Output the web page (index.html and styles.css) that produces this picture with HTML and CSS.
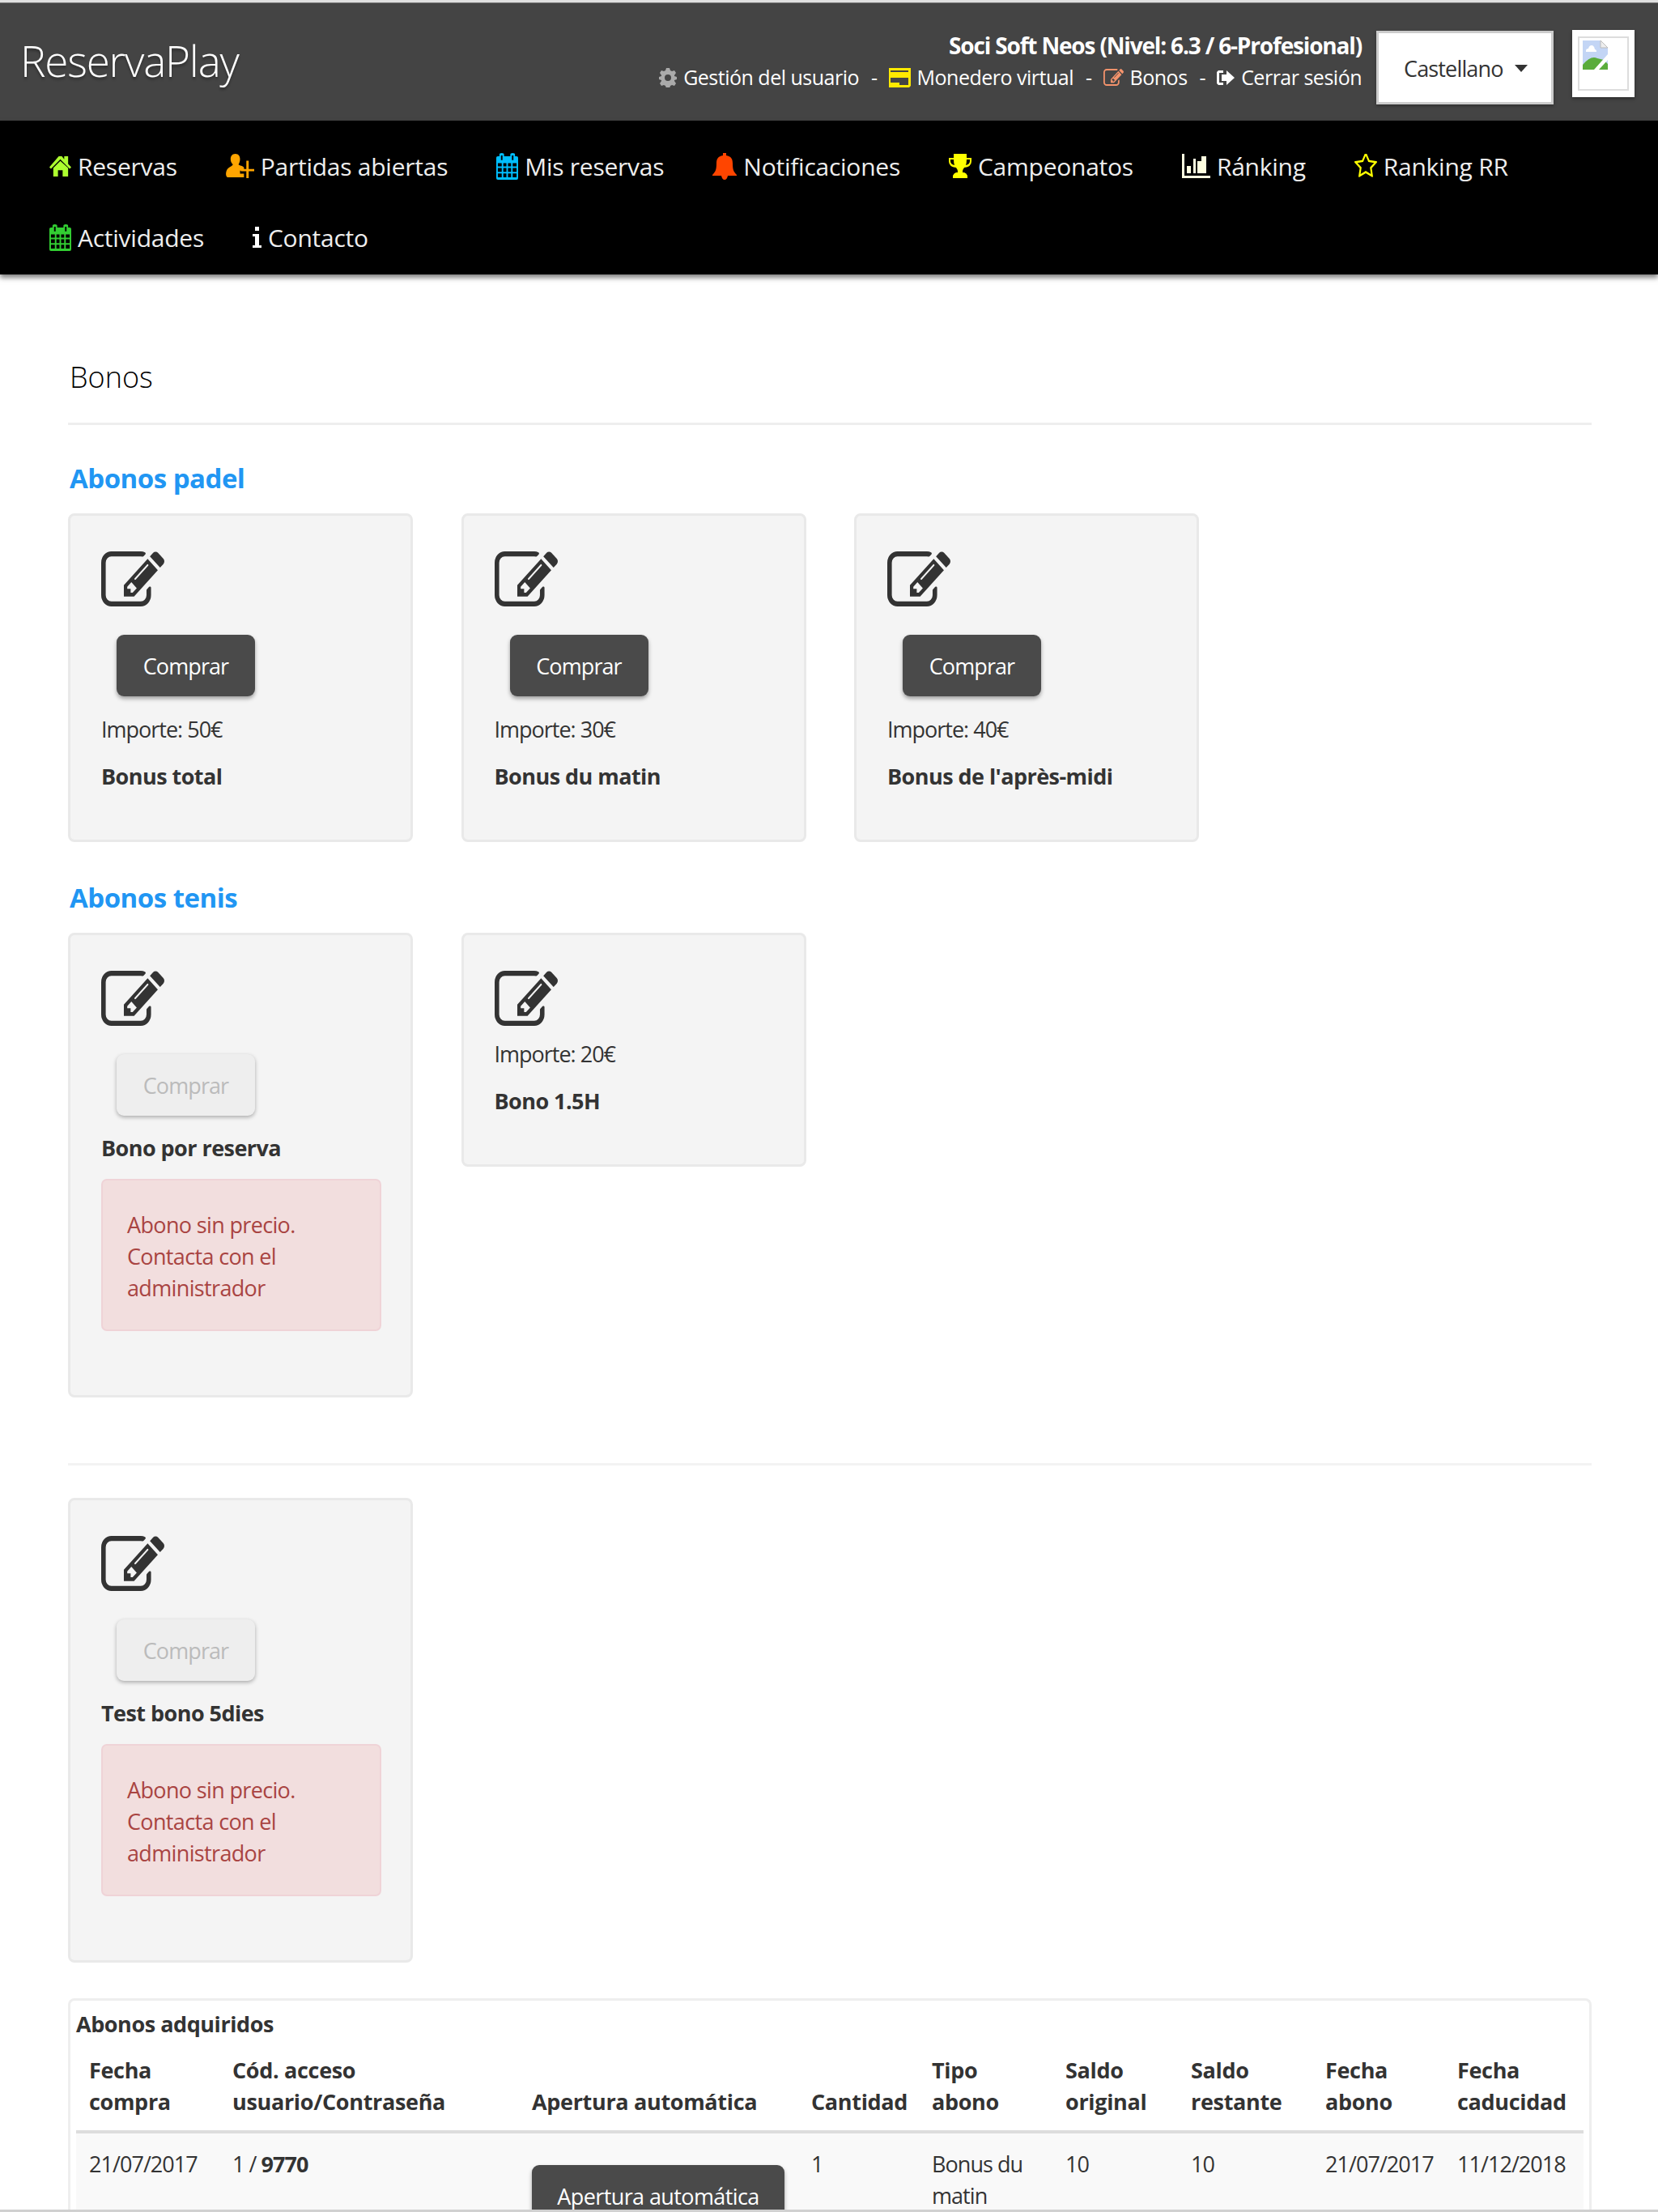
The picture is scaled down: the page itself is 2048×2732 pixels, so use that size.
FILE: index.html
```
<!DOCTYPE html>
<html lang="es">
<head>
    <meta charset="UTF-8">
    <title>ReservaPlay</title>
    <link rel="stylesheet" href="styles.css">
</head>
<body>
    <!-- Icons -->
    <svg class="sprite">
        <symbol id="edit" viewBox="0 128 1784 1408" preserveAspectRatio="none"><path d="M888 1184l116-116-152-152-116 116v56h96v96h56zm440-720q-16-16-33 1l-350 350q-17 17-1 33t33-1l350-350q17-17 1-33zm80 594v190q0 119-84.500 203.500t-203.500 84.500h-832q-119 0-203.500-84.500t-84.500-203.500v-832q0-119 84.500-203.500t203.500-84.500h832q63 0 117 25 15 7 18 23 3 17-9 29l-49 49q-14 14-32 8-23-6-45-6h-832q-66 0-113 47t-47 113v832q0 66 47 113t113 47h832q66 0 113-47t47-113v-126q0-13 9-22l64-64q15-15 35-7t20 29zm-96-738l288 288-672 672h-288v-288zm444 132l-92 92-288-288 92-92q28-28 68-28t68 28l152 152q28 28 28 68t-28 68z"/></symbol>
        <symbol id="home" viewBox="0 0 28 26" preserveAspectRatio="none"><path d="M14 6L5 15v11h6v-8h6v8h7V15z"/><path d="M12 0L0 14l2 2L14 4l12 12 2-2-4-4V0h-5v4l-3-4z"/></symbol>
        <symbol id="user-plus" viewBox="0 0 36 32" preserveAspectRatio="none"><path d="M12 0c4 0 6 3 6 7 0 3-1 5-2 7 2 2 5 1 7 4v4h-5v4h5v5H2c-3-2-2-8 0-11 2-3 5-3 7-6C7 12 6 10 6 7c0-4 2-7 6-7z"/><path d="M26 9h3v11h7v3h-7v9h-3v-9h-7v-3h7z"/></symbol>
        <symbol id="calendar" viewBox="0 0 28 34" preserveAspectRatio="none"><path fill-rule="evenodd" d="M2 4h2V2q0-2 3-2t3 2v2h8V2q0-2 3-2t3 2v2h2q2 0 2 2v26q0 2-2 2H2q-2 0-2-2V6q0-2 2-2zm0 9v4h5v-4zm7 0v4h4v-4zm6 0v4h4v-4zm6 0v4h5v-4zM2 19v5h5v-5zm7 0v5h4v-5zm6 0v5h4v-5zm6 0v5h5v-5zM2 26v5h5v-5zm7 0v5h4v-5zm6 0v5h4v-5zm6 0v5h5v-5zM6 3v6h2V3zm14 0v6h2V3z"/></symbol>
        <symbol id="bell" viewBox="0 0 30 33" preserveAspectRatio="none"><path d="M13 0h4v3c6 1 8 4 8 10 0 7 1 10 5 14v1H19q-1 5-4 5t-4-5H0v-1c4-4 5-7 5-14 0-6 2-9 8-10z"/></symbol>
        <symbol id="trophy" viewBox="0 0 28 30" preserveAspectRatio="none"><path fill-rule="evenodd" d="M6 0h16v5h6v4q0 7-9 8-2 2-2 6h2q3 1 4 4v3H5v-3q1-3 4-4h2q0-4-2-6-9-1-9-8V5h6zM2 7v2q0 4 5 5-1-3-1-7zm20 0q0 4-1 7 5-1 5-5V7z"/></symbol>
        <symbol id="chart" viewBox="0 0 35 30" preserveAspectRatio="none"><path d="M0 0h3v27h32v3H0zM6 15h5v9H6zm8-9h3v18h-3zm5 3h5V3h6v21H19z"/></symbol>
        <symbol id="star" viewBox="64 128 1664 1560" preserveAspectRatio="none"><path d="M1201 1004l306-297-422-62-189-382-189 382-422 62 306 297-73 421 378-199 377 199zm527-357q0 22-26 48l-363 354 86 500q1 7 1 20 0 50-41 50-19 0-40-12l-449-236-449 236q-22 12-40 12-21 0-31.500-14.500t-10.500-35.500q0-6 2-20l86-500-364-354q-25-27-25-48 0-37 56-46l502-73 225-455q19-41 49-41t49 41l225 455 502 73q56 9 56 46z"/></symbol>
        <symbol id="info" viewBox="0 0 11 26" preserveAspectRatio="none"><path d="M3 0h5v5H3zM0 9h8v14h3v3H0v-3h3V12H0z"/></symbol>
        <symbol id="cog" viewBox="0 0 22 24" preserveAspectRatio="none"><path fill-rule="evenodd" d="M9 0h4l1 3 2 1 3-1 2 3-2 3v1l3 1v3l-3 1v1l2 3-2 3-3-1-2 1-1 3H9l-1-3-2-1-3 1-2-3 2-3v-1l-3-1v-3l3-1V9L1 6l2-3 3 1 2-1zm2 8a4 4 0 1 0 0 8 4 4 0 0 0 0-8z"/></symbol>
        <symbol id="card" viewBox="0 0 27 24" preserveAspectRatio="none"><path fill-rule="evenodd" d="M0 0h27v22l-2 2H0zM2 3v2h22V3zm0 9v6h11v3h11v-9z"/></symbol>
        <symbol id="sign-out" viewBox="0 0 22 20" preserveAspectRatio="none"><path d="M0 3l2-2h6v3H3v12h5v3H2l-2-2z"/><path d="M6 6h6V1l10 9-10 9v-5H6z"/></symbol>
    </svg>

    <header class="header">
        <a class="brand" href="#">ReservaPlay</a>
        <div class="user">
            <strong class="user-name">Soci Soft Neos (Nivel: 6.3 / 6-Profesional)</strong>
            <div class="user-links">
                <svg class="icon cog"><use href="#cog"/></svg><a>Gestión del usuario</a><i>-</i>
                <svg class="icon card"><use href="#card"/></svg><a>Monedero virtual</a><i>-</i>
                <svg class="icon edit"><use href="#edit"/></svg><a>Bonos</a><i>-</i>
                <svg class="icon sign-out"><use href="#sign-out"/></svg><a>Cerrar sesión</a>
            </div>
        </div>
        <button class="lang">Castellano <span class="caret"></span></button>
        <div class="avatar">
            <div class="avatar-inner">
                <!-- missing photo -->
                <svg viewBox="0 0 31 36" width="31" height="36"><path fill="#c3d5f5" d="M0 0h22l9 9v27H0z"/><path fill="#fff" d="M4 13q0-3 3-3 1-4 4-4t4 5q2 0 2 3H4z"/><path fill="#5aac3c" d="M0 36V30q10-12 18-8l8 2 5 5v7z"/><path fill="#fff" d="M31 17v7L20 36h-6z"/><path fill="#eee" stroke="#bbb" d="M22 0v9h9z"/></svg>
            </div>
        </div>
    </header>

    <nav class="nav">
        <a><svg class="icon home"><use href="#home"/></svg><span>Reservas</span></a>
        <a><svg class="icon user-plus"><use href="#user-plus"/></svg><span>Partidas abiertas</span></a>
        <a><svg class="icon calendar"><use href="#calendar"/></svg><span>Mis reservas</span></a>
        <a><svg class="icon bell"><use href="#bell"/></svg><span>Notificaciones</span></a>
        <a><svg class="icon trophy"><use href="#trophy"/></svg><span>Campeonatos</span></a>
        <a><svg class="icon chart"><use href="#chart"/></svg><span>Ránking</span></a>
        <a><svg class="icon star"><use href="#star"/></svg><span>Ranking RR</span></a>
        <a><svg class="icon calendar green"><use href="#calendar"/></svg><span>Actividades</span></a>
        <a><svg class="icon info"><use href="#info"/></svg><span>Contacto</span></a>
    </nav>

    <main class="content">
        <h1>Bonos</h1>

        <h2>Abonos padel</h2>
        <div class="row">
            <div class="well">
                <svg class="icon big"><use href="#edit"/></svg>
                <button class="btn">Comprar</button>
                <p>Importe: 50€</p>
                <p><b>Bonus total</b></p>
            </div>
            <div class="well">
                <svg class="icon big"><use href="#edit"/></svg>
                <button class="btn">Comprar</button>
                <p>Importe: 30€</p>
                <p><b>Bonus du matin</b></p>
            </div>
            <div class="well">
                <svg class="icon big"><use href="#edit"/></svg>
                <button class="btn">Comprar</button>
                <p>Importe: 40€</p>
                <p><b>Bonus de l'après-midi</b></p>
            </div>
        </div>

        <h2>Abonos tenis</h2>
        <div class="row">
            <div class="well">
                <svg class="icon big"><use href="#edit"/></svg>
                <button class="btn" disabled>Comprar</button>
                <p><b>Bono por reserva</b></p>
                <div class="alert">Abono sin precio. Contacta con el administrador</div>
            </div>
            <div class="well">
                <svg class="icon big"><use href="#edit"/></svg>
                <p>Importe: 20€</p>
                <p><b>Bono 1.5H</b></p>
            </div>
        </div>

        <hr>
        <div class="row">
            <div class="well">
                <svg class="icon big"><use href="#edit"/></svg>
                <button class="btn" disabled>Comprar</button>
                <p><b>Test bono 5dies</b></p>
                <div class="alert">Abono sin precio. Contacta con el administrador</div>
            </div>
        </div>

        <div class="panel">
            <b class="panel-title">Abonos adquiridos</b>
            <table>
                <colgroup><col class="c1"><col class="c2"><col class="c3"><col class="c4"><col class="c5"><col class="c6"><col class="c7"><col class="c8"><col></colgroup>
                <thead>
                    <tr>
                        <th>Fecha<br>compra</th>
                        <th>Cód. acceso<br>usuario/Contraseña</th>
                        <th>Apertura automática</th>
                        <th>Cantidad</th>
                        <th>Tipo<br>abono</th>
                        <th>Saldo<br>original</th>
                        <th>Saldo<br>restante</th>
                        <th>Fecha<br>abono</th>
                        <th>Fecha<br>caducidad</th>
                    </tr>
                </thead>
                <tbody>
                    <tr>
                        <td>21/07/2017</td>
                        <td>1 / <b>9770</b></td>
                        <td><button class="btn open">Apertura automática</button></td>
                        <td>1</td>
                        <td>Bonus du<br>matin</td>
                        <td>10</td>
                        <td>10</td>
                        <td>21/07/2017</td>
                        <td>11/12/2018</td>
                    </tr>
                </tbody>
            </table>
        </div>
    </main>
</body>
</html>
```
FILE: styles.css
```
* {
    box-sizing: border-box;
}

body {
    margin: 0;
    height: 2732px;
    overflow: hidden;
    background: #fff;
    color: #333;
    font-family: "Open Sans", sans-serif;
    font-size: 27px;
    line-height: 39px;
    border-top: 3px solid #e0e0e0;
    border-bottom: 3px solid #d0d0d0;
}

.sprite {
    display: none;
}

.icon {
    fill: currentColor;
    flex: none;
}

/* Header */
.header {
    display: flex;
    height: 146px;
    padding: 0 29px 0 25px;
    background: #444;
    color: #fff;
    border-top: 1px solid #777;
}

.brand {
    margin-top: 35px;
    font-size: 53px;
    font-weight: 300;
    line-height: 72px;
    color: #fff;
    letter-spacing: -1.2px;
    text-decoration: none;
    text-shadow: 0 3px 3px rgba(0, 0, 0, 0.3);
}

.user {
    margin-left: auto;
    padding-top: 33px;
    text-align: right;
    white-space: nowrap;
}

.user-name {
    display: block;
    font-size: 28px;
    letter-spacing: -1.17px;
    line-height: 39px;
}

.user-links {
    display: flex;
    align-items: center;
    justify-content: flex-end;
    height: 39px;
    font-size: 25px;
    letter-spacing: -0.5px;
}

.user-links a {
    margin-left: 8px;
}

.user-links i {
    font-style: normal;
    margin: 0 14px 0 15px;
}

.cog { width: 22px; height: 24px; color: #aaa; }
.card { width: 27px; height: 24px; color: #ffe900; }
.edit { width: 25px; height: 21px; color: #f4936c; }
.sign-out { width: 22px; height: 20px; }

.lang {
    display: flex;
    align-items: center;
    width: 219px;
    height: 91px;
    margin: 34px 23px 0 18px;
    padding: 2px 0 0 31px;
    background: #fff;
    border: 3px solid #ccc;
    font: inherit;
    letter-spacing: -0.85px;
    color: #333;
    box-shadow: 0 2px 4px rgba(0, 0, 0, 0.3);
}

.caret {
    margin-left: 14px;
    border: 8px solid transparent;
    border-top: 9px solid #333;
    border-bottom: 0;
}

.avatar {
    width: 77px;
    height: 83px;
    margin-top: 33px;
    padding: 8px 7px;
    background: #fff;
    box-shadow: 0 2px 4px rgba(0, 0, 0, 0.4);
}

.avatar-inner {
    height: 67px;
    padding: 3px 4px;
    border: 2px solid #ddd;
    line-height: 0;
}

/* Menu */
.nav {
    display: flex;
    flex-wrap: wrap;
    align-content: flex-start;
    height: 190px;
    padding: 12px 31px 0;
    background: #000;
    color: #eee;
    font-size: 30px;
    letter-spacing: -0.25px;
    box-shadow: 0 4px 6px rgba(0, 0, 0, 0.5);
}

.nav a {
    display: flex;
    align-items: center;
    height: 88px;
    padding: 0 30px;
    white-space: nowrap;
}

.nav span {
    margin-left: 8px;
}

.home { width: 27px; height: 25px; color: #adff2f; }
.user-plus { width: 35px; height: 30px; color: #ffa500; }
.calendar { width: 27px; height: 33px; color: #00bfff; }
.green { color: #32cd32; }
.bell { width: 30px; height: 33px; color: #ff4500; }
.trophy { width: 28px; height: 30px; color: #ff0; }
.chart { width: 35px; height: 30px; color: #ffffe0; }
.star { width: 28px; height: 30px; color: #ff0; }
.info { width: 11px; height: 26px; color: #fff; }

/* Bonos */
.content {
    padding: 99px 82px 0 84px;
}

h1 {
    margin: 0 0 38px;
    padding: 0 0 28px 2px;
    border-bottom: 3px solid #eee;
    font-size: 36px;
    font-weight: 300;
    line-height: 56px;
    color: #000;
}

h2 {
    margin: 0 0 15px 2px;
    font-size: 33px;
    font-weight: 700;
    line-height: 56px;
    letter-spacing: -0.5px;
    color: #2196f3;
}

.row {
    display: flex;
    align-items: flex-start;
    gap: 59.500px;
    margin-bottom: 41px;
}

.well {
    width: 426px;
    padding: 44px 38px 40px;
    background: #f4f4f4;
    border: 3px solid #e9e9e9;
    border-radius: 8px;
}

.big {
    display: block;
    width: 78px;
    height: 68px;
    margin-bottom: 15px;
}

.well p {
    margin: 0 0 19px;
    letter-spacing: -1px;
    white-space: nowrap;
}

.well p b {
    letter-spacing: -0.55px;
}

.btn {
    display: block;
    width: 171px;
    height: 76px;
    margin: 35px 0 21px 19px;
    border: 0;
    border-radius: 9px;
    background: #4a4a4a;
    color: #fff;
    font: inherit;
    letter-spacing: -0.9px;
    box-shadow: 0 3px 5px rgba(0, 0, 0, 0.35);
}

.btn:disabled {
    margin-bottom: 20px;
    background: #eee;
    color: #bbb;
    box-shadow: 0 2px 5px rgba(0, 0, 0, 0.3);
}

.alert {
    width: 346px;
    height: 188px;
    margin-bottom: 39px;
    padding: 35px 30px 0 30px;
    border: 2px solid #efd3d7;
    border-radius: 7px;
    background: #f2dede;
    color: #a94442;
    letter-spacing: -0.65px;
}

hr {
    margin: 81px 0 40px;
    border: 0;
    border-top: 3px solid #f3f3f3;
}

/* Table */
.panel {
    margin-top: 44px;
    padding: 9px 7px 0;
    border: 3px solid #eee;
    border-bottom: 0;
    border-radius: 8px 8px 0 0;
}

.panel-title {
    display: block;
    letter-spacing: -0.45px;
}

table {
    width: 100%;
    table-layout: fixed;
    border-collapse: collapse;
}

th, td {
    padding: 18px 0 18px 16px;
    text-align: left;
    vertical-align: top;
    white-space: nowrap;
}

th {
    padding-bottom: 16px;
    vertical-align: bottom;
    border-bottom: 4px solid #ddd;
    letter-spacing: -0.33px;
}

td {
    background: #f9f9f9;
    letter-spacing: -0.95px;
}

.c1 { width: 177px; }
.c2 { width: 370px; }
.c3 { width: 345px; }
.c4 { width: 149px; }
.c5 { width: 165px; }
.c6 { width: 155px; }
.c7 { width: 166px; }
.c8 { width: 163px; }

.open {
    width: 312px;
    margin: 21px 0 0;
    letter-spacing: -0.6px;
}
```
